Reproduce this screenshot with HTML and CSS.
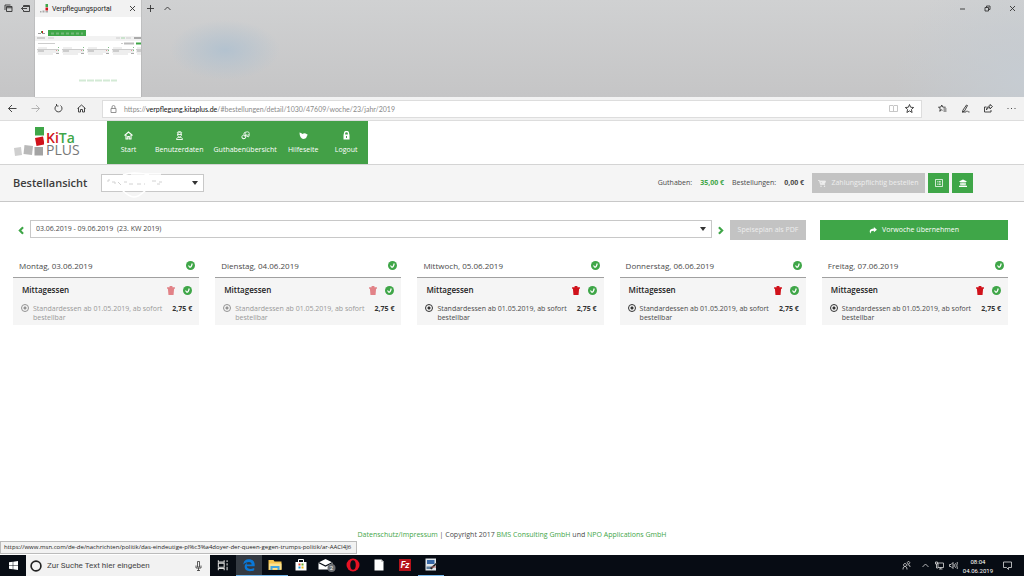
FILE: index.html
```html
<!DOCTYPE html>
<html lang="de">
<head>
<meta charset="utf-8">
<meta name="viewport" content="width=device-width, initial-scale=1">
<title>Verpflegungsportal</title>
<link rel="stylesheet" href="styles.css">
</head>
<body>
<svg class="sprite" aria-hidden="true">
  <symbol id="check" viewBox="0 0 18 18"><circle cx="9" cy="9" r="9" fill="#3fa648"/><path d="M5 9l2.500 3.500c3 0 4-3 5-7.500" fill="none" stroke="#fff" stroke-width="2.400"/></symbol>
  <symbol id="trash" viewBox="0 0 14 16"><path d="M0 2h4.500V0h5v2H14v3H0zM1.500 5h11L11.500 16h-9z" fill="currentColor"/></symbol>
  <symbol id="chevron-left" viewBox="0 0 10 14"><path d="M8.500 1.500L3 7l5.500 5.500" fill="none" stroke="currentColor" stroke-width="3.500"/></symbol>
  <symbol id="chevron-right" viewBox="0 0 10 14"><path d="M1.500 1.500L7 7l-5.500 5.500" fill="none" stroke="currentColor" stroke-width="3.500"/></symbol>
</svg>

<header class="browser">
  <div class="tabstrip">
    <div class="tab-tools">
      <button aria-label="Beiseitegelegte Registerkarten"><svg viewBox="0 0 18 18" class="ic9"><path d="M2 12V2h11M5 15V5h11v10zM5 7.500h11" /></svg></button>
      <button aria-label="Registerkarten beiseitelegen"><svg viewBox="0 0 18 18" class="ic9"><path d="M5 6V3h12v12H5v-3M5 5h12M12 9H1m3-3L1 9l3 3"/></svg></button>
    </div>
    <div class="tab">
      <div class="tab-head">
        <svg class="favicon" viewBox="0 0 18 18"><path fill="#3fa648" d="M12 0h5v6h-5z"/><path fill="#d0121b" d="M12 7h5v6h-5z"/><path fill="#aaa" d="M1 14h3v3H1zM6 13h4v4H6zM12 14h5v3h-5z"/></svg>
        <span class="tab-title">Verpflegungsportal</span>
        <button aria-label="Registerkarte schließen"><svg viewBox="0 0 14 14" class="ic7"><path d="M2 2l10 10M12 2L2 12"/></svg></button>
      </div>
      <svg class="preview" viewBox="0 0 106 80" preserveAspectRatio="none" aria-hidden="true">
        <path fill="#fff" d="M0 0h106v80H0z"/>
        <path fill="#3fa648" d="M13 13h38v6H13z"/><path stroke="#72b878" stroke-dasharray="3 2" d="M16 16.500h32"/>
        <path fill="#3fa648" d="M6 14h1v2H6z"/><path fill="#d0121b" d="M7 14h1v2H7z"/><path fill="#999" d="M3 16h3v1H3zM7 16h3v1H7z"/>
        <path fill="#f2f2f2" d="M0 19h106v5H0z"/><path fill="#aaa" d="M2 20.500h8v1H2zM99 20h7v2h-7z"/><path fill="#ccc" d="M13 20.500h6v1h-6zM81 20.500h4v1h-4zM91 20.500h5v1h-5z"/><path fill="#a5d3a8" d="M86 20.500h4v1h-4z"/>
        <path fill="#ccc" d="M3 26h17v1H3zM86 26h2v1h-2z"/><path fill="#bbb" d="M89 25.500h10v2H89z"/><path fill="#3fa648" d="M101 25.500h5v2h-5z"/>
        <g id="pv"><path fill="#ddd" d="M3 30.500h9v1H3zM3 36.500h15v1H3z"/><path fill="#eee" d="M2 32h22v4H2z"/><path fill="#aaa" d="M3 33.500h6v1H3zM2 32h22v.5H2zM21 36h3v1h-3z"/><path fill="#7fc085" d="M23 30h1v1h-1zM23 33h1v1h-1z"/><path fill="#e29a9a" d="M21 33h1v1h-1z"/></g>
        <use href="#pv" x="25"/><use href="#pv" x="50"/><use href="#pv" x="75"/><use href="#pv" x="99"/>
        <path stroke="#d3ead5" stroke-dasharray="7 1" d="M44 63.500h38"/>
      </svg>
    </div>
    <div class="tab-tools tab-add">
      <button aria-label="Neue Registerkarte"><svg viewBox="0 0 14 14" class="ic7"><path d="M7 0v14M0 7h14"/></svg></button>
      <button aria-label="Vorschau ausblenden"><svg viewBox="0 0 14 14" class="ic7"><path d="M1 10l6-6 6 6"/></svg></button>
    </div>
    <div class="window-tools">
      <button aria-label="Minimieren"><svg viewBox="0 0 14 14" class="ic7"><path d="M2 8h10"/></svg></button>
      <button aria-label="Verkleinern"><svg viewBox="0 0 14 14" class="ic7"><path d="M2 5h7v7H2zM5 5V2h7v7H9"/></svg></button>
      <button aria-label="Schließen"><svg viewBox="0 0 14 14" class="ic7"><path d="M2 2l10 10M12 2L2 12"/></svg></button>
    </div>
  </div>
  <div class="toolbar">
    <div class="nav-tools">
      <button aria-label="Zurück"><svg viewBox="0 0 18 18" class="ic9"><path d="M17 9H1M8 2L1 9l7 7"/></svg></button>
      <button aria-label="Vorwärts" disabled><svg viewBox="0 0 18 18" class="ic9"><path d="M1 9h16M10 2l7 7-7 7"/></svg></button>
      <button aria-label="Aktualisieren"><svg viewBox="0 0 18 18" class="ic9"><path d="M5 3a7 7 0 1 0 8 0M5 0v4h4"/></svg></button>
      <button aria-label="Startseite"><svg viewBox="0 0 18 18" class="ic9"><path d="M1 9l8-7 8 7M3 8v8h4v-5h4v5h4V8"/></svg></button>
    </div>
    <div class="address">
      <svg viewBox="0 0 14 16" class="lock"><path d="M2 7h10v8H2zM4 7V4a3 3 0 0 1 6 0v3"/></svg>
      <span class="url">https://<b>verpflegung.kitaplus.de</b>/#bestellungen/detail/1030/47609/woche/23/jahr/2019</span>
      <button class="faint" aria-label="Leseansicht"><svg viewBox="0 0 18 18" class="ic9"><path d="M1 3h7l1 1 1-1h7v12H1zM9 4v11"/></svg></button>
      <button aria-label="Favorit"><svg viewBox="0 0 18 18" class="ic9"><path d="M9 1l2.300 5.500 6 .5-4.500 4 1.400 6L9 13.800 3.800 17l1.400-6L.7 7l6-.5z"/></svg></button>
    </div>
    <div class="hub-tools">
      <button aria-label="Favoriten"><svg viewBox="0 0 18 18" class="ic9"><path d="M9 12.500L7.500 11.500 3.500 14.500l1.200-5L1 6.500l4.700-.4L7.500 2l1.800 4.100 6 .4M11 10h6M11 14h6"/></svg></button>
      <button aria-label="Notizen"><svg viewBox="0 0 18 18" class="ic9"><path d="M4 12L11 2l2 1-6 11-4 2zM2 16h7c2 0 1-2 3-2s1 2 5 2"/></svg></button>
      <button aria-label="Teilen"><svg viewBox="0 0 18 18" class="ic9"><path d="M5 6H1v10h13v-4M5 12c1-4 4-5 7-5v3l5-5-5-4v3C7 4 5 8 5 12z"/></svg></button>
      <button aria-label="Mehr"><svg viewBox="0 0 18 18" class="ic9"><path d="M1 9h2M8 9h2M15 9h2"/></svg></button>
    </div>
  </div>
</header>

<div class="site">
  <div class="site-head">
    <a class="logo" href="#" aria-label="KiTa PLUS">
      <svg viewBox="0 0 30 30"><path fill="#3fa648" d="M21 0h9v8.500h-9z"/><path fill="#d0121b" d="M21 11l8-1.500 1.500 8-8 1.500z"/><path fill="#cfcfcf" d="M0 21l7-1 1 8-7 1z"/><path fill="#b9b9b9" d="M10.500 18l8.500 1-1 9-8.500-1z"/><path fill="#a3a3a3" d="M20.500 20h8.500v8.500h-8.500z"/></svg>
      <span class="logo-text"><span><span class="red">Ki</span><span class="green">Ta</span></span><span class="plus">PLUS</span></span>
    </a>
    <nav class="menu">
      <a href="#"><svg viewBox="0 0 18 18"><path d="M1 9l8-7 8 7M4 8v8h3.500v-5h3v5H14V8" fill="none" stroke="#fff" stroke-width="2.200"/></svg>Start</a>
      <a href="#"><svg viewBox="0 0 18 18"><path d="M5 7a4 4 0 0 1 8 0c0 3-2 5-4 5S5 10 5 7zM4 4c2-4 8-4 10 0M3 17c0-4 3-4 6-4s6 0 6 4zM5 7h8" fill="none" stroke="#fff" stroke-width="1.800"/></svg>Benutzerdaten</a>
      <a href="#"><svg viewBox="0 0 18 18"><g fill="none" stroke="#fff" stroke-width="1.600"><ellipse cx="12.500" cy="5" rx="4" ry="3.500"/><ellipse cx="5.500" cy="12" rx="4" ry="3.500"/><path d="M2 13c2 3 6 3 7 0M6 8V4l3-2M9 9l6 3 2-5M10 8l-3 3"/></g></svg>Guthabenübersicht</a>
      <a href="#"><svg viewBox="0 0 18 18"><path d="M1 3c2 0 4 2 6 3 2-2 6-2 8 0l3 2-2 1c0 5-4 7-8 7-4-1-7-6-7-13z" fill="#fff"/></svg>Hilfeseite</a>
      <a href="#"><svg viewBox="0 0 18 18"><path d="M5 8V5a4 4 0 0 1 8 0v3" fill="none" stroke="#fff" stroke-width="2.600"/><path d="M3 7h12v10H3zM8 10v4h2v-4z" fill="#fff" fill-rule="evenodd"/></svg>Logout</a>
    </nav>
  </div>

  <div class="subhead">
    <h1>Bestellansicht</h1>
    <div class="select person">
      <select aria-label="Person"><option></option></select>
      <svg class="scribble" viewBox="0 0 102 32" aria-hidden="true"><path d="M7 13h2M7 13v2M11 15h3v2M17 15l3 3M23 15h3M28 17h4M36 17h4M43 17h1M51 14h4M56 17h3M58 15h3" stroke="#d2d2d2" stroke-width="1" fill="none"/><path d="M30 7h30M22 8c8-3 18-2 26 0M20 22c4 4 8 8 13 8s8-4 12-7" stroke="#fff" stroke-width="1.500" fill="none"/></svg>
    </div>
    <dl class="balance">
      <dt>Guthaben:</dt><dd class="green">35,00 €</dd>
      <dt>Bestellungen:</dt><dd>0,00 €</dd>
    </dl>
    <div class="actions">
      <button class="btn grey" disabled><svg viewBox="0 0 16 14"><path d="M0 1h3l2 8h9M4 2h11l-1.500 5H5z" stroke="currentColor" stroke-width="1.500" fill="currentColor"/><circle cx="6" cy="12.500" r="1.500" fill="currentColor"/><circle cx="13" cy="12.500" r="1.500" fill="currentColor"/></svg>Zahlungspflichtig bestellen</button>
      <button class="btn square" aria-label="Liste"><svg viewBox="0 0 18 18"><path d="M1 1h16v16H1zM5 5.500h1.500M8 5.500h5M5 9h1.500M8 9h5M5 12.500h1.500M8 12.500h5" fill="none" stroke="#fff" stroke-width="1.800"/></svg></button>
      <button class="btn square" aria-label="Bank"><svg viewBox="0 0 18 18"><path d="M9 1l8 4v2H1V5zM3 8h12v6H3zM0 15h18v3H0z" fill="#fff"/><path d="M6 8v5M9 8v5M12 8v5" stroke="#3fa648" stroke-width=".8"/></svg></button>
    </div>
  </div>

  <main>
    <div class="week">
      <button class="step" aria-label="Vorherige Woche"><svg viewBox="0 0 10 14"><use href="#chevron-left"/></svg></button>
      <div class="select span"><select aria-label="Woche"><option>03.06.2019 - 09.06.2019&nbsp; (23. KW 2019)</option></select></div>
      <button class="step" aria-label="Nächste Woche"><svg viewBox="0 0 10 14"><use href="#chevron-right"/></svg></button>
      <button class="btn grey pdf" disabled>Speiseplan als PDF</button>
      <button class="btn takeover"><svg viewBox="0 0 18 16"><path d="M11 0l7 6-7 6V8.500C6 8.500 3 10 4 15 0 12 0 4 11 3.500z" fill="currentColor"/></svg>Vorwoche übernehmen</button>
    </div>

    <div class="days">
      <section class="day past">
        <h2>Montag, 03.06.2019<svg class="ok"><use href="#check"/></svg></h2>
        <div class="meal">
          <h3>Mittagessen<button class="del" aria-label="Löschen" disabled><svg><use href="#trash"/></svg></button><svg class="ok"><use href="#check"/></svg></h3>
          <div class="choice"><input type="radio" name="mo" id="mo" checked disabled><label for="mo">Standardessen ab 01.05.2019, ab sofort bestellbar</label><b>2,75 €</b></div>
        </div>
      </section>
      <section class="day past">
        <h2>Dienstag, 04.06.2019<svg class="ok"><use href="#check"/></svg></h2>
        <div class="meal">
          <h3>Mittagessen<button class="del" aria-label="Löschen" disabled><svg><use href="#trash"/></svg></button><svg class="ok"><use href="#check"/></svg></h3>
          <div class="choice"><input type="radio" name="di" id="di" checked disabled><label for="di">Standardessen ab 01.05.2019, ab sofort bestellbar</label><b>2,75 €</b></div>
        </div>
      </section>
      <section class="day">
        <h2>Mittwoch, 05.06.2019<svg class="ok"><use href="#check"/></svg></h2>
        <div class="meal">
          <h3>Mittagessen<button class="del" aria-label="Löschen"><svg><use href="#trash"/></svg></button><svg class="ok"><use href="#check"/></svg></h3>
          <div class="choice"><input type="radio" name="mi" id="mi" checked><label for="mi">Standardessen ab 01.05.2019, ab sofort bestellbar</label><b>2,75 €</b></div>
        </div>
      </section>
      <section class="day">
        <h2>Donnerstag, 06.06.2019<svg class="ok"><use href="#check"/></svg></h2>
        <div class="meal">
          <h3>Mittagessen<button class="del" aria-label="Löschen"><svg><use href="#trash"/></svg></button><svg class="ok"><use href="#check"/></svg></h3>
          <div class="choice"><input type="radio" name="do" id="do" checked><label for="do">Standardessen ab 01.05.2019, ab sofort bestellbar</label><b>2,75 €</b></div>
        </div>
      </section>
      <section class="day">
        <h2>Freitag, 07.06.2019<svg class="ok"><use href="#check"/></svg></h2>
        <div class="meal">
          <h3>Mittagessen<button class="del" aria-label="Löschen"><svg><use href="#trash"/></svg></button><svg class="ok"><use href="#check"/></svg></h3>
          <div class="choice"><input type="radio" name="fr" id="fr" checked><label for="fr">Standardessen ab 01.05.2019, ab sofort bestellbar</label><b>2,75 €</b></div>
        </div>
      </section>
    </div>
  </main>

  <footer><a href="#">Datenschutz/Impressum</a> | Copyright 2017 <a href="#">BMS Consulting GmbH</a> und <a href="#">NPO Applications GmbH</a></footer>
  <div class="status">https://www.msn.com/de-de/nachrichten/politik/das-eindeutige-pl%c3%a4doyer-der-queen-gegen-trumps-politik/ar-AACI4J6</div>
</div>

<div class="taskbar">
  <button class="start" aria-label="Start"><svg viewBox="0 0 18 18"><path d="M0 2.500L7.500 1.500v7H0zM8.500 1.300L18 0v8.500H8.500zM0 9.500h7.500v7L0 15.500zM8.500 9.500H18V18l-9.500-1.300z" fill="#fff"/></svg></button>
  <div class="search">
    <svg viewBox="0 0 22 22" class="cortana"><circle cx="11" cy="11" r="9" fill="none" stroke="#222" stroke-width="3"/></svg>
    <input type="text" aria-label="Suche" placeholder="Zur Suche Text hier eingeben">
    <svg viewBox="0 0 14 20" class="mic"><path d="M5 1h4v11H5zM2 9v5h10V9M7 14v5M4 19h6"/></svg>
  </div>
  <div class="apps">
    <button aria-label="Taskansicht"><svg viewBox="0 0 24 24"><path d="M4 4v3h10V4M4 9h10v7H4zM4 21v-3h10v3M19 4v3M19 9v4M19 15v6" fill="none" stroke="#ddd" stroke-width="1.800"/></svg></button>
    <button class="active open" aria-label="Edge"><svg viewBox="0 0 32 32"><path d="M3 15C4 6 9 3 16 3c8 0 13 5 13 12v4H11c0 4 4 6 9 6 3 0 6-1 8-2v5c-3 2-6 2-10 2C10 30 6 26 6 20c0-4 2-7 6-9-1 1-2 3-1 4h11c0-4-2-6-6-6-5 0-10 2-13 6z" fill="#0a78d7"/></svg></button>
    <button class="open" aria-label="Explorer"><svg viewBox="0 0 28 28"><path d="M1 4h10l2 3h14v17H1z" fill="#f7c64f"/><path d="M2 11h25v12H2z" fill="#fbe18f"/><path d="M5 24v-8h18v8h-4v-4H9v4z" fill="#42a5df"/></svg></button>
    <button aria-label="Store"><svg viewBox="0 0 28 28"><path d="M9 8V3h10v5" fill="none" stroke="#fff" stroke-width="2"/><path d="M3 8h22v17H3z" fill="#fff"/><path d="M9 11h4v4H9z" fill="#e5482f"/><path d="M15 11h4v4h-4z" fill="#6fae2e"/><path d="M9 17h4v4H9z" fill="#1f9fdb"/><path d="M15 17h4v4h-4z" fill="#f5b81c"/></svg></button>
    <button aria-label="Mail"><svg viewBox="0 0 36 28" class="wide"><path d="M1 9l14-7 14 7v14H1z" fill="#fff"/><path d="M1 9l14 7 14-7" fill="none" stroke="#0a0f17" stroke-width="2.500"/><circle cx="27" cy="20" r="8" fill="#6b6e72"/><text x="27" y="24" class="badge">2</text></svg></button>
    <button aria-label="Opera"><svg viewBox="0 0 28 28"><ellipse cx="14" cy="14" rx="13" ry="13" fill="#e81224"/><ellipse cx="14" cy="14" rx="5.500" ry="9.500" fill="#0a0f17"/></svg></button>
    <button aria-label="Dokument"><svg viewBox="0 0 28 28"><path d="M5 3h14l4 4v18H5z" fill="#fff"/><path d="M19 3v4h4" fill="none" stroke="#999"/></svg></button>
    <button aria-label="FileZilla"><svg viewBox="0 0 28 28"><path d="M2 2h24v24H2z" fill="#b5121b"/><text x="14" y="20" class="fz">Fz</text></svg></button>
    <button class="open" aria-label="Bildbearbeitung"><svg viewBox="0 0 28 28"><path d="M3 1h21v24H3z" fill="#dfe5ea"/><path d="M6 4h15v8H6z" fill="#3767a6"/><path d="M5 17h10v5H5z" fill="#5f7f9e"/><path d="M12 20L25 9l2 2-12 12z" fill="#222"/><path d="M15 17h9v2h-9z" fill="#b66"/></svg></button>
  </div>
  <div class="tray">
    <svg viewBox="0 0 18 18"><path d="M2 17c0-5 2-6 4-6s4 1 4 6M6 5a3 3 0 1 0 .1 0M13 1a2.500 2.500 0 1 0 .1 0M11 8c4-1 5 1 5 4"/></svg>
    <svg viewBox="0 0 18 18" class="up"><path d="M3 12l6-6 6 6"/></svg>
    <svg viewBox="0 0 18 18"><path d="M6 4h11v9H6zM8 16h7M11.500 13v3M1 2h4v4H1zM3 6v8h3"/></svg>
    <svg viewBox="0 0 18 18"><path d="M1 7h3l4-4v12l-4-4H1zM10 6c1 2 1 4 0 6M13 4c2 3 2 7 0 10M16 2c3 5 3 9 0 14"/></svg>
    <time datetime="2019-06-04T08:04"><span>08:04</span><span>04.06.2019</span></time>
    <svg viewBox="0 0 18 18" class="note"><path d="M1 2h16v11h-6v4l-4-4H1z"/></svg>
  </div>
</div>
</body>
</html>
```
FILE: styles.css
```css
* { box-sizing: border-box; }

body {
  margin: 0;
  min-height: 100vh;
  display: flex;
  flex-direction: column;
  background: #fff;
  color: #4a4a4a;
  font: 7px/10px "Open Sans", "Noto Sans", sans-serif;
}

button, select, input { font: inherit; color: inherit; margin: 0; }
button { display: flex; align-items: center; justify-content: center; padding: 0; border: 0; background: none; }
h1, h2, h3, dl, dd { margin: 0; font: inherit; }
a { color: #3fa648; text-decoration: none; }
svg { display: block; flex: none; }
.sprite { position: absolute; width: 0; height: 0; }
.green { color: #3fa648; }
.red { color: #d0121b; }

/* Browser window */
.browser { font-family: Roboto, sans-serif; }
.browser svg { fill: none; stroke: #333; stroke-width: 1.8; }
.browser .ic9 { width: 9px; height: 9px; }
.browser .ic7 { width: 7px; height: 7px; }

.tabstrip {
  display: flex;
  height: 97px;
  background:
    radial-gradient(ellipse 55px 30px at 225px 50px, #b3c2cf, transparent),
    radial-gradient(ellipse 130px 110px at 100% 80%, #c6ccd2, transparent),
    linear-gradient(#d0d1d2, #c5c5c6);
}
.tab-tools { display: flex; align-items: center; height: 17px; width: 35px; padding-left: 4px; gap: 8px; }
.tab-add { width: auto; padding-left: 6px; gap: 10px; }
.window-tools { display: flex; align-items: center; height: 17px; gap: 18px; margin-left: auto; padding-right: 8px; }
.tab { width: 106px; display: flex; flex-direction: column; background: #fff; box-shadow: 0 0 1px #777; }
.tab-head { display: flex; align-items: center; height: 17px; padding: 0 5px 0 4px; background: #f2f2f2; color: #222; }
.browser .favicon { width: 10px; height: 9px; stroke: none; }
.tab-title { flex: 1; padding-left: 3px; }
.browser .preview { width: 100%; height: 80px; stroke: none; }

.toolbar { display: flex; align-items: center; height: 24px; background: #f2f2f2; border-bottom: 1px solid #ddd; }
.nav-tools { display: flex; gap: 14px; padding: 0 16px 0 8px; }
.nav-tools button:disabled { opacity: .35; }
.address { flex: 1; display: flex; align-items: center; height: 18px; padding: 0 7px; gap: 7px; background: #fff; border: 1px solid #ddd; }
.browser .lock { width: 7px; height: 8px; stroke: #888; }
.url { flex: 1; color: #8a8a8a; font-family: Lato, sans-serif; }
.url b { font-weight: 400; color: #111; }
.faint { opacity: .3; }
.hub-tools { display: flex; gap: 14px; padding: 0 8px 0 16px; }

/* Site */
.site { position: relative; flex: 1; display: flex; flex-direction: column; }
.site-head { display: flex; align-items: stretch; height: 44px; border-bottom: 1px solid #d4d4d4; }
.logo { display: flex; gap: 2px; width: 107px; padding: 6px 0 0 14px; }
.logo svg { width: 30px; height: 30px; }
.logo-text { display: flex; flex-direction: column; padding-top: 5px; font-size: 14px; line-height: 12px; font-weight: 600; }
.plus { color: #777; font-weight: 400; }
.menu { display: flex; height: 43px; background: #43a047; }
.menu a { display: flex; flex-direction: column; align-items: center; gap: 5px; min-width: 43px; padding: 10px 5px 0; color: #fff; }
.menu svg { width: 9px; height: 9px; }

.subhead { display: flex; align-items: center; height: 37px; padding: 0 51px 0 13px; background: #f5f5f5; border-bottom: 1px solid #c8c8c8; }
.subhead h1 { width: 88px; font-size: 11px; line-height: 14px; font-weight: 600; color: #3c3c3c; }
.select { position: relative; height: 18px; }
.select select { display: block; width: 100%; height: 100%; appearance: none; padding: 0 5px; border: 1px solid #c8c8c8; border-radius: 0; background: #fff; }
.select::after { content: ""; position: absolute; right: 6px; top: 7px; border: 3px solid transparent; border-top: 4px solid #333; border-bottom: 0; }
.person { width: 103px; }
.scribble { position: absolute; left: 0; top: -7px; width: 102px; height: 32px; pointer-events: none; }
.balance { display: flex; gap: 8px; margin-left: auto; padding-right: 8px; }
.balance dd { font-weight: 700; }
.actions { display: flex; gap: 3px; }
.btn { height: 20px; gap: 5px; background: #3fa648; color: #fff; }
.btn svg { width: 8px; height: 7px; }
.btn.grey { background: #c3c3c3; color: #eee; }
.actions .grey { width: 113px; }
.btn.square { width: 21px; }
.btn.square svg { width: 8px; height: 8px; }

main { padding: 18px 16px 0 13px; }
.week { display: flex; align-items: flex-start; gap: 6px; padding-left: 5px; }
.step { color: #3fa648; width: 6px; height: 20px; }
.step svg { width: 6px; height: 9px; }
.span { flex: 1; }
.pdf { width: 76px; }
.takeover { width: 188px; margin-left: 8px; }

.days { display: grid; grid-template-columns: repeat(5, 1fr); gap: 16px; margin-top: 14px; }
.day h2 { display: flex; align-items: center; justify-content: space-between; height: 24px; padding: 0 4px 0 6px; border-bottom: 1px solid #a0a0a0; font-size: 8px; }
.ok { width: 9px; height: 9px; }
.meal { background: #f5f5f5; padding: 6px 7px 3px 8px; }
.meal h3 { display: flex; align-items: center; gap: 8px; height: 12px; padding-left: 1px; font-size: 8px; font-weight: 600; color: #222; }
.del { margin-left: auto; color: #d0121b; }
.del svg { width: 8px; height: 9px; }
.choice { display: flex; align-items: flex-start; gap: 4px; padding-top: 8px; line-height: 9px; }
.choice input { appearance: none; flex: none; width: 8px; height: 8px; border: 1px solid #333; border-radius: 50%; background: radial-gradient(circle, #333 0 1px, transparent 2px); }
.choice label { flex: 1; }
.choice b { color: #333; }
.past label { color: #999; }
.past input { opacity: .5; }
.past .del { opacity: .5; }

footer { margin-top: auto; padding-bottom: 15px; text-align: center; }
.status { position: absolute; left: 0; bottom: 1px; height: 13px; padding: 0 5px 0 3px; font-size: 6px; line-height: 11px; white-space: nowrap; background: #f2f2f2; border: 1px solid #bbb; color: #222; }

/* Taskbar */
.taskbar { display: flex; height: 21px; background: #070c14; color: #fff; font-family: Roboto, sans-serif; }
.start { width: 26px; }
.start svg { width: 9px; height: 9px; }
.search { display: flex; align-items: center; width: 184px; padding: 0 8px 0 4px; gap: 5px; background: #f2f2f2; }
.cortana { width: 12px; height: 12px; }
.search input { flex: 1; min-width: 0; padding: 0; border: 0; background: none; font-size: 8px; }
.search input::placeholder { color: #444; opacity: 1; }
.mic { width: 7px; height: 10px; fill: none; stroke: #333; stroke-width: 1.6; }
.apps { display: flex; }
.apps button { width: 26px; border-bottom: 1px solid transparent; }
.apps svg { width: 14px; height: 14px; }
.apps .wide { width: 18px; }
.apps .open { border-bottom-color: #76b9ed; }
.apps .active { background: #343a42; }
.badge { font-size: 12px; fill: #fff; text-anchor: middle; }
.fz { font-size: 17px; font-weight: 700; font-style: italic; fill: #fff; text-anchor: middle; }
.tray { display: flex; align-items: center; gap: 5px; margin-left: auto; padding-right: 12px; }
.tray svg { width: 9px; height: 9px; fill: none; stroke: #ddd; stroke-width: 1.6; }
.tray .up { margin-left: 5px; }
.tray time { display: flex; flex-direction: column; align-items: center; line-height: 9px; font-size: 6px; }
.tray .note { margin-left: 5px; }
```
